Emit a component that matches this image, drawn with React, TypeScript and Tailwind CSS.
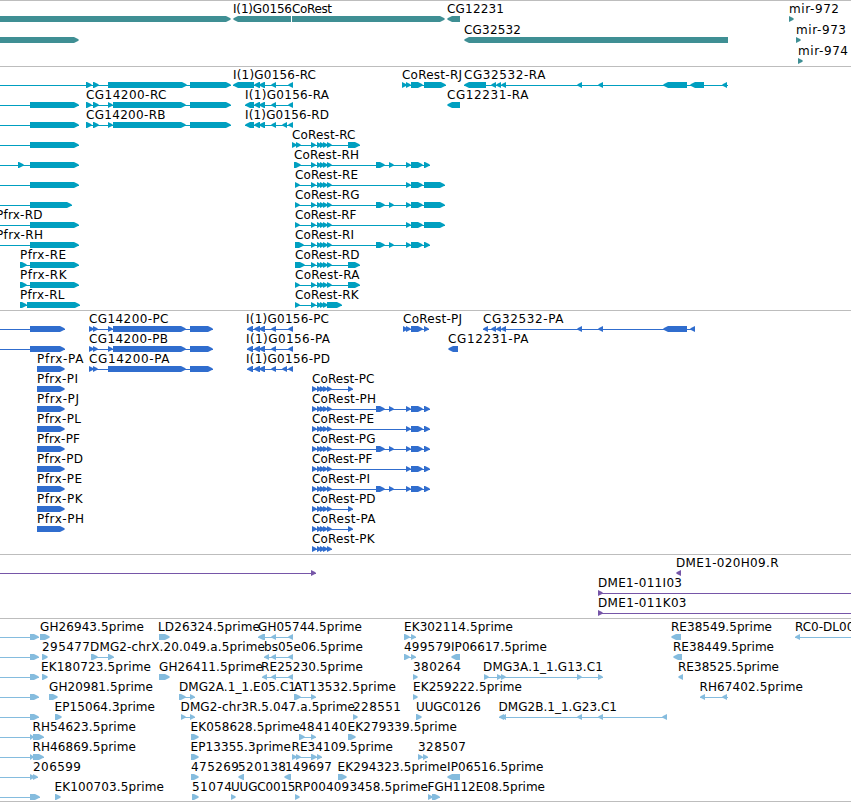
import React from 'react';

type Span = [number, number];

type Feature = {
  row: number;
  label?: string;
  x?: number; // label position, when it differs from the feature start
  dir?: 'left' | 'right';
  from?: number;
  to?: number;
  spans: Span[];
};

type Track = {
  id: string;
  height: string;
  color: string;
  pitch: number;
  features: Feature[];
};

const WIDTH = 851;
const BAR = 6;
const HEAD = 5;

// exon groups shared by several transcripts
const small: Span[] = [[311, 316], [317, 322], [320, 325], [323, 328], [327, 332]];
const smallCds: Span[] = [[312, 317], [317, 322], [320, 325], [323, 328], [327, 332]];
const middle: Span[] = [[376, 385], [389, 394]];
const tailShort: Span[] = [[406, 411], [411, 423], [424, 430]];
const tailLong: Span[] = [[406, 411], [411, 423], [424, 445]];
const cg14200: Span[] = [[108, 113], [113, 186], [190, 231]];
const cg14200Cds: Span[] = [[108, 113], [113, 186], [190, 213]];
const g0156: Span[] = [[254, 260], [259, 265], [271, 276]];

const genes: Feature[] = [
  { row: 0, spans: [[-10, 231]] },
  { row: 0, label: 'I(1)G0156', dir: 'left', spans: [[233, 291]] },
  { row: 0, label: 'CoRest', spans: [[292, 445]] },
  { row: 0, label: 'CG12231', dir: 'left', spans: [[447, 460]] },
  { row: 0, label: 'mir-972', spans: [[789, 794]] },
  { row: 1, spans: [[-10, 79]] },
  { row: 1, label: 'CG32532', dir: 'left', spans: [[464, 728]] },
  { row: 1, label: 'mir-973', spans: [[796, 801]] },
  { row: 2, label: 'mir-974', spans: [[798, 803]] },
];

const transcripts: Feature[] = [
  { row: 0, from: 0, spans: [[86, 92], [93, 99], [108, 187], [190, 231]] },
  { row: 0, label: 'I(1)G0156-RC', dir: 'left', spans: [[233, 254], ...g0156, [288, 293]] },
  { row: 0, label: 'CoRest-RJ', spans: [[402, 407], [406, 411], [411, 423], [424, 446]] },
  { row: 0, label: 'CG32532-RA', dir: 'left', to: 728, spans: [[464, 486], [491, 496], [496, 501], [501, 506], [577, 582], [598, 603], [663, 687], [690, 704], [722, 727]] },
  { row: 1, from: 0, spans: [[30, 79]] },
  { row: 1, label: 'CG14200-RC', spans: [[86, 92], [93, 99], ...cg14200] },
  { row: 1, label: 'I(1)G0156-RA', dir: 'left', spans: [[245, 254], ...g0156, [288, 293]] },
  { row: 1, label: 'CG12231-RA', dir: 'left', spans: [[447, 460]] },
  { row: 2, from: 0, spans: [[30, 79]] },
  { row: 2, label: 'CG14200-RB', spans: [[86, 92], [93, 99], ...cg14200] },
  { row: 2, label: 'I(1)G0156-RD', dir: 'left', spans: [[245, 254], ...g0156, [282, 287], [288, 293]] },
  { row: 3, from: 0, spans: [[30, 79]] },
  { row: 3, label: 'CoRest-RC', spans: [[292, 297], [296, 301], ...small, [348, 360]] },
  { row: 4, from: 0, spans: [[18, 24], [30, 79]] },
  { row: 4, label: 'CoRest-RH', spans: [[294, 301], ...small, ...middle, ...tailShort] },
  { row: 5, from: 0, spans: [[30, 79]] },
  { row: 5, label: 'CoRest-RE', spans: [[295, 300], ...small, ...tailLong] },
  { row: 6, from: 0, spans: [[30, 72]] },
  { row: 6, label: 'CoRest-RG', spans: [[295, 300], ...small, ...middle, ...tailLong] },
  { row: 7, label: 'Pfrx-RD', x: -4, from: 0, spans: [[30, 79]] },
  { row: 7, label: 'CoRest-RF', spans: [[295, 300], ...small, ...tailLong] },
  { row: 8, label: 'Pfrx-RH', x: -4, from: 0, spans: [[30, 79]] },
  { row: 8, label: 'CoRest-RI', spans: [[295, 304], ...small, ...middle, ...tailShort] },
  { row: 9, label: 'Pfrx-RE', spans: [[20, 27], [30, 79]] },
  { row: 9, label: 'CoRest-RD', spans: [[295, 305], ...small, [348, 360]] },
  { row: 10, label: 'Pfrx-RK', spans: [[20, 27], [30, 79]] },
  { row: 10, label: 'CoRest-RA', spans: [[295, 300], ...small, [348, 360]] },
  { row: 11, label: 'Pfrx-RL', spans: [[20, 27], [27, 80]] },
  { row: 11, label: 'CoRest-RK', spans: [[295, 300], [311, 316], [317, 322], [320, 325], [323, 328], [327, 342]] },
];

const proteins: Feature[] = [
  { row: 0, from: 0, spans: [[30, 65]] },
  { row: 0, label: 'CG14200-PC', spans: [[89, 94], [93, 98], ...cg14200Cds] },
  { row: 0, label: 'I(1)G0156-PC', x: 246, dir: 'left', spans: [[247, 253], ...g0156, [288, 293]] },
  { row: 0, label: 'CoRest-PJ', spans: [[403, 408], [406, 411], [411, 423], [424, 429]] },
  { row: 0, label: 'CG32532-PA', dir: 'left', spans: [[483, 488], [491, 496], [496, 501], [501, 506], [577, 582], [598, 603], [663, 687], [690, 695]] },
  { row: 1, from: 0, spans: [[30, 65]] },
  { row: 1, label: 'CG14200-PB', spans: [[89, 94], [93, 98], ...cg14200Cds] },
  { row: 1, label: 'I(1)G0156-PA', x: 246, dir: 'left', spans: [[247, 253], ...g0156, [288, 293]] },
  { row: 1, label: 'CG12231-PA', dir: 'left', spans: [[448, 458]] },
  { row: 2, label: 'Pfrx-PA', spans: [[37, 65]] },
  { row: 2, label: 'CG14200-PA', spans: [[89, 94], [93, 98], [108, 186], [190, 213]] },
  { row: 2, label: 'I(1)G0156-PD', x: 246, dir: 'left', spans: [[247, 253], ...g0156, [282, 287], [288, 293]] },
  { row: 3, label: 'Pfrx-PI', spans: [[37, 65]] },
  { row: 3, label: 'CoRest-PC', spans: [...smallCds, [348, 353]] },
  { row: 4, label: 'Pfrx-PJ', spans: [[37, 65]] },
  { row: 4, label: 'CoRest-PH', spans: [...smallCds, ...middle, ...tailShort] },
  { row: 5, label: 'Pfrx-PL', spans: [[37, 65]] },
  { row: 5, label: 'CoRest-PE', spans: [...smallCds, ...tailShort] },
  { row: 6, label: 'Pfrx-PF', spans: [[37, 65]] },
  { row: 6, label: 'CoRest-PG', spans: [...smallCds, ...middle, ...tailShort] },
  { row: 7, label: 'Pfrx-PD', spans: [[37, 65]] },
  { row: 7, label: 'CoRest-PF', spans: [...smallCds, ...tailShort] },
  { row: 8, label: 'Pfrx-PE', spans: [[37, 65]] },
  { row: 8, label: 'CoRest-PI', spans: [...smallCds, ...middle, ...tailShort] },
  { row: 9, label: 'Pfrx-PK', spans: [[37, 65]] },
  { row: 9, label: 'CoRest-PD', spans: [...smallCds, [348, 353]] },
  { row: 10, label: 'Pfrx-PH', spans: [[37, 65]] },
  { row: 10, label: 'CoRest-PA', spans: [...smallCds, [348, 353]] },
  { row: 11, label: 'CoRest-PK', spans: smallCds },
];

const clones: Feature[] = [
  { row: 0, from: 0, spans: [[311, 316]] },
  { row: 0, label: 'DME1-020H09.R', dir: 'left', spans: [[676, 681]] },
  { row: 1, label: 'DME1-011I03', to: WIDTH, spans: [[598, 603]] },
  { row: 2, label: 'DME1-011K03', to: WIDTH, spans: [[598, 603]] },
];

const ests: Feature[] = [
  { row: 0, from: 0, spans: [[30, 39]] },
  { row: 0, label: 'GH26943.5prime', spans: [[40, 50]] },
  { row: 0, label: 'LD26324.5prime', x: 158, spans: [[159, 170]] },
  { row: 0, label: 'GH05744.5prime', dir: 'left', spans: [[258, 265], [271, 276], [288, 293]] },
  { row: 0, label: 'EK302114.5prime', spans: [[404, 410], [411, 416]] },
  { row: 0, label: 'RE38549.5prime', dir: 'left', spans: [[671, 681]] },
  { row: 0, label: 'RC0-DL00', dir: 'left', to: WIDTH, spans: [[795, 800]] },
  { row: 1, from: 0, spans: [[30, 39]] },
  { row: 1, label: '295477', spans: [[42, 48]] },
  { row: 1, label: 'DMG2-chrX.20.049.a.5prime', x: 90, spans: [[91, 98], [108, 114]] },
  { row: 1, label: 'bs05e06.5prime', dir: 'left', spans: [[264, 269], [271, 276], [288, 293]] },
  { row: 1, label: '499579', spans: [[404, 410], [411, 416]] },
  { row: 1, label: 'IP06617.5prime', dir: 'left', spans: [[451, 460]] },
  { row: 1, label: 'RE38449.5prime', dir: 'left', spans: [[673, 682]] },
  { row: 2, from: 0, spans: [[30, 39]] },
  { row: 2, label: 'EK180723.5prime', x: 41, spans: [[42, 48]] },
  { row: 2, label: 'GH26411.5prime', spans: [[159, 170]] },
  { row: 2, label: 'RE25230.5prime', x: 261, dir: 'left', spans: [[262, 267], [271, 276], [288, 293]] },
  { row: 2, label: '380264', spans: [[413, 418]] },
  { row: 2, label: 'DMG3A.1_1.G13.C1', x: 483, spans: [[484, 489], [497, 502], [501, 506], [577, 582], [598, 603]] },
  { row: 2, label: 'RE38525.5prime', dir: 'left', spans: [[678, 683]] },
  { row: 3, from: 0, spans: [[30, 39]] },
  { row: 3, label: 'GH20981.5prime', spans: [[49, 58]] },
  { row: 3, label: 'DMG2A.1_1.E05.C1', spans: [[179, 186], [190, 195]] },
  { row: 3, label: 'AT13532.5prime', spans: [[294, 301], [311, 316]] },
  { row: 3, label: 'EK259222.5prime', spans: [[413, 418]] },
  { row: 3, label: 'RH67402.5prime', x: 699.5, dir: 'left', to: 728, spans: [[700, 705], [722, 727]] },
  { row: 4, from: 0, spans: [[30, 39]] },
  { row: 4, label: 'EP15064.3prime', x: 54.5, spans: [[55, 62]] },
  { row: 4, label: 'DMG2-chr3R.5.047.a.5prime', x: 180.5, spans: [[181, 186], [190, 195]] },
  { row: 4, label: '228551', spans: [[353, 358]] },
  { row: 4, label: 'UUGC0126', spans: [[416, 422]] },
  { row: 4, label: 'DMG2B.1_1.G23.C1', x: 498.5, dir: 'left', spans: [[499, 504], [501, 506], [577, 582], [598, 603], [662, 667]] },
  { row: 5, label: 'RH54623.5prime', x: 32.5, from: 0, spans: [[30, 34], [33, 44]] },
  { row: 5, label: 'EK058628.5prime', x: 190.5, spans: [[191, 199]] },
  { row: 5, label: '484140', spans: [[299, 305], [311, 316]] },
  { row: 5, label: 'EK279339.5prime', x: 347.5, spans: [[348, 356]] },
  { row: 6, label: 'RH46869.5prime', x: 32.5, from: 0, spans: [[30, 34], [33, 44]] },
  { row: 6, label: 'EP13355.3prime', x: 190.5, spans: [[191, 199]] },
  { row: 6, label: 'RE34109.5prime', x: 291.5, spans: [[292, 297], [296, 301], [311, 317], [317, 322]] },
  { row: 6, label: '328507', spans: [[418, 423], [423, 428]] },
  { row: 7, label: '206599', x: 33, from: 0, spans: [[30, 35], [33, 38]] },
  { row: 7, label: '475269', spans: [[191, 199]] },
  { row: 7, label: '520138', dir: 'left', spans: [[238, 244]] },
  { row: 7, label: '149697', x: 285, dir: 'left', spans: [[284, 291]] },
  { row: 7, label: 'EK294323.5prime', x: 337.5, spans: [[338, 347]] },
  { row: 7, label: 'IP06516.5prime', dir: 'left', spans: [[447, 460]] },
  { row: 8, from: 0, spans: [[30, 40]] },
  { row: 8, label: 'EK100703.5prime', x: 54.5, spans: [[55, 61]] },
  { row: 8, label: '51074', spans: [[192, 199]] },
  { row: 8, label: 'UUGC0015', spans: [[231, 236]] },
  { row: 8, label: 'RP004093458.5prime', x: 294.5, spans: [[295, 300]] },
  { row: 8, label: 'FGH112E08.5prime', x: 427.5, spans: [[428, 433], [432, 440]] },
];

// label advance widths in pixels
const labelWidths: Record<string, number> = {
  'I(1)G0156': 59, CoRest: 40, CG12231: 57, CG32532: 57,
  'mir-972': 50, 'mir-973': 50, 'mir-974': 50,
  'I(1)G0156-RC': 83, 'I(1)G0156-RA': 84, 'I(1)G0156-RD': 84,
  'I(1)G0156-PC': 83, 'I(1)G0156-PA': 84, 'I(1)G0156-PD': 84,
  'CG14200-RC': 80.5, 'CG14200-RB': 79.5, 'CG14200-PC': 79.5, 'CG14200-PB': 79, 'CG14200-PA': 80.5,
  'CG32532-RA': 81.5, 'CG12231-RA': 81.5, 'CG32532-PA': 80.5, 'CG12231-PA': 80.5,
  'CoRest-RC': 63.5, 'CoRest-RH': 65, 'CoRest-RE': 63, 'CoRest-RG': 64.5, 'CoRest-RF': 61.5,
  'CoRest-RI': 59, 'CoRest-RD': 64.5, 'CoRest-RA': 64.5, 'CoRest-RK': 63.5, 'CoRest-RJ': 60,
  'CoRest-PC': 62.5, 'CoRest-PH': 64, 'CoRest-PE': 62, 'CoRest-PG': 63.5, 'CoRest-PF': 60.5,
  'CoRest-PI': 58, 'CoRest-PD': 63.5, 'CoRest-PA': 63.5, 'CoRest-PK': 62.5, 'CoRest-PJ': 59,
  'Pfrx-RD': 46.5, 'Pfrx-RH': 47, 'Pfrx-RE': 46, 'Pfrx-RK': 46.5, 'Pfrx-RL': 44.5,
  'Pfrx-PA': 46.5, 'Pfrx-PI': 41, 'Pfrx-PJ': 42, 'Pfrx-PL': 44, 'Pfrx-PF': 43,
  'Pfrx-PD': 46, 'Pfrx-PE': 45, 'Pfrx-PK': 45.5, 'Pfrx-PH': 47,
  'DME1-020H09.R': 102.5, 'DME1-011I03': 84, 'DME1-011K03': 88.5,
  'GH26943.5prime': 104, 'LD26324.5prime': 102, 'GH05744.5prime': 104, 'EK302114.5prime': 109,
  'RE38549.5prime': 101, 'DMG2-chrX.20.049.a.5prime': 175, 'bs05e06.5prime': 99,
  'IP06617.5prime': 96, 'RE38449.5prime': 101, 'EK180723.5prime': 110, 'GH26411.5prime': 104,
  'RE25230.5prime': 102, 'DMG3A.1_1.G13.C1': 120, 'RE38525.5prime': 101, 'GH20981.5prime': 104,
  'DMG2A.1_1.E05.C1': 117, 'AT13532.5prime': 102, 'EK259222.5prime': 109, 'RH67402.5prime': 103.5,
  'EP15064.3prime': 100.5, 'DMG2-chr3R.5.047.a.5prime': 174.5, UUGC0126: 65, 'DMG2B.1_1.G23.C1': 118.5,
  'RH54623.5prime': 103.5, 'EK058628.5prime': 109.5, 'EK279339.5prime': 109.5,
  'RH46869.5prime': 103.5, 'EP13355.3prime': 100.5, 'RE34109.5prime': 101.5,
  'EK294323.5prime': 109.5, 'IP06516.5prime': 96.5, 'EK100703.5prime': 109.5,
  UUGC0015: 64.5, 'RP004093458.5prime': 133.5, 'FGH112E08.5prime': 117.5,
  '295477': 48, '499579': 47, '380264': 48, '228551': 48, '484140': 48, '328507': 48,
  '206599': 48, '475269': 48, '520138': 48, '149697': 47, '51074': 40,
};

const tracks: Track[] = [
  { id: 'genes', height: 'h-[66px]', color: 'fill-[#3f8f94]', pitch: 21, features: genes },
  { id: 'transcripts', height: 'h-[244px]', color: 'fill-[#009fc0]', pitch: 20, features: transcripts },
  { id: 'proteins', height: 'h-[244px]', color: 'fill-[#306dce]', pitch: 20, features: proteins },
  { id: 'clones', height: 'h-[64px]', color: 'fill-[#7656a8]', pitch: 20, features: clones },
  { id: 'ests', height: 'h-[183px]', color: 'fill-[#85bcde]', pitch: 20, features: ests },
];

function arrow([start, end]: Span, top: number, dir: 'left' | 'right') {
  const head = Math.min(HEAD, end - start);
  const mid = top + BAR / 2;
  const bottom = top + BAR;
  if (dir === 'left') {
    return `${end},${top} ${start + head},${top} ${start + 1},${mid - 1} ${start},${mid} ${start + 1},${mid + 1} ${start + head},${bottom} ${end},${bottom}`;
  }
  return `${start},${top} ${end - head},${top} ${end - 1},${mid - 1} ${end},${mid} ${end - 1},${mid + 1} ${end - head},${bottom} ${start},${bottom}`;
}

function FeatureGlyph({ feature, pitch }: { feature: Feature; pitch: number }) {
  const { row, label, dir = 'right', spans } = feature;
  // the track's border takes the first pixel
  const top = 15 + row * pitch;
  const from = feature.from ?? spans[0][0];
  const to = feature.to ?? spans[spans.length - 1][1];

  return (
    <g>
      {(spans.length > 1 || feature.from !== undefined || feature.to !== undefined) && (
        <rect x={from} y={top + 3} width={to - from} height={1} />
      )}
      {spans.map((span) => (
        <polygon key={span[0]} points={arrow(span, top, dir)} />
      ))}
      {label && (
        <text
          x={feature.x ?? spans[0][0]}
          y={top - 3}
          textLength={labelWidths[label]}
          className="fill-black"
        >
          {label}
        </text>
      )}
    </g>
  );
}

export default function App() {
  return (
    <main className="flex w-[851px] flex-col overflow-hidden border-b border-[#bdbdbd] bg-white">
      {tracks.map((track) => (
        <section key={track.id} className={`${track.height} border-t border-[#bdbdbd]`}>
          <svg
            width={WIDTH}
            className={`block h-full font-['DejaVu_Sans',sans-serif] text-[12px] ${track.color}`}
          >
            {track.features.map((feature, i) => (
              <FeatureGlyph key={i} feature={feature} pitch={track.pitch} />
            ))}
          </svg>
        </section>
      ))}
    </main>
  );
}
